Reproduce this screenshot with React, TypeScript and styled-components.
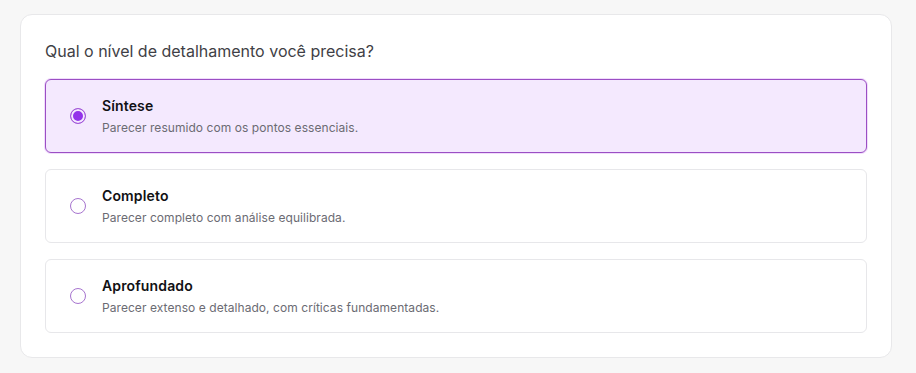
import React, { useState } from 'react'
import styled, { createGlobalStyle } from 'styled-components'

const GlobalStyle = createGlobalStyle`
	html, body {
		margin: 0;
		background: #f7f7f7;
		font-family: Inter, "Noto Sans", sans-serif;
	}
`

const OPTIONS = [
	{ id: 'sintese', title: 'Síntese', description: 'Parecer resumido com os pontos essenciais.' },
	{ id: 'completo', title: 'Completo', description: 'Parecer completo com análise equilibrada.' },
	{ id: 'aprofundado', title: 'Aprofundado', description: 'Parecer extenso e detalhado, com críticas fundamentadas.' },
]

export default function App() {
	const [selected, setSelected] = useState('sintese')

	return (
		<Page>
			<GlobalStyle />
			<Card>
				<Question>Qual o nível de detalhamento você precisa?</Question>
				<List>
					{OPTIONS.map((option) => {
						const active = option.id === selected
						return (
							<Option key={option.id} $active={active} onClick={() => setSelected(option.id)}>
								<Radio $active={active} />
								<Texts>
									<Title>{option.title}</Title>
									<Description>{option.description}</Description>
								</Texts>
							</Option>
						)
					})}
				</List>
			</Card>
		</Page>
	)
}

const Page = styled.div`
	padding: 14px 24px 16px 20px;
`

const Card = styled.div`
	background: #ffffff;
	border: 1px solid #e8e8ea;
	border-radius: 12px;
	padding: 24px;
`

const Question = styled.div`
	font-size: 16px;
	line-height: 24px;
	color: #3f3f46;
	margin-bottom: 16px;
`

const List = styled.div`
	display: flex;
	flex-direction: column;
	gap: 16px;
`

const Option = styled.div<{ $active: boolean }>`
	display: flex;
	align-items: center;
	gap: 16px;
	padding: 16px 24px;
	border-radius: 6px;
	cursor: pointer;
	border: 1px solid ${(p) => (p.$active ? '#9b4fc4' : '#e7e7ea')};
	background: ${(p) => (p.$active ? '#f4e9fe' : '#ffffff')};
	box-shadow: ${(p) => (p.$active ? '0 0 0 1px #f0dcfb' : 'none')};
`

const Radio = styled.span<{ $active: boolean }>`
	flex: none;
	box-sizing: border-box;
	width: 16px;
	height: 16px;
	border-radius: 50%;
	border: 1.5px solid ${(p) => (p.$active ? '#a35ad6' : '#a774cf')};
	background: ${(p) => (p.$active ? '#9333ea' : '#ffffff')};
	box-shadow: ${(p) => (p.$active ? 'inset 0 0 0 2px #f4e9fe' : 'none')};
`

const Texts = styled.div`
	display: flex;
	flex-direction: column;
	gap: 4px;
`

const Title = styled.div`
	font-size: 14px;
	line-height: 20px;
	font-weight: 600;
	color: #111114;
	letter-spacing: 0.01em;
`

const Description = styled.div`
	font-size: 12px;
	line-height: 16px;
	color: #6b6b73;
	letter-spacing: 0.005em;
`
